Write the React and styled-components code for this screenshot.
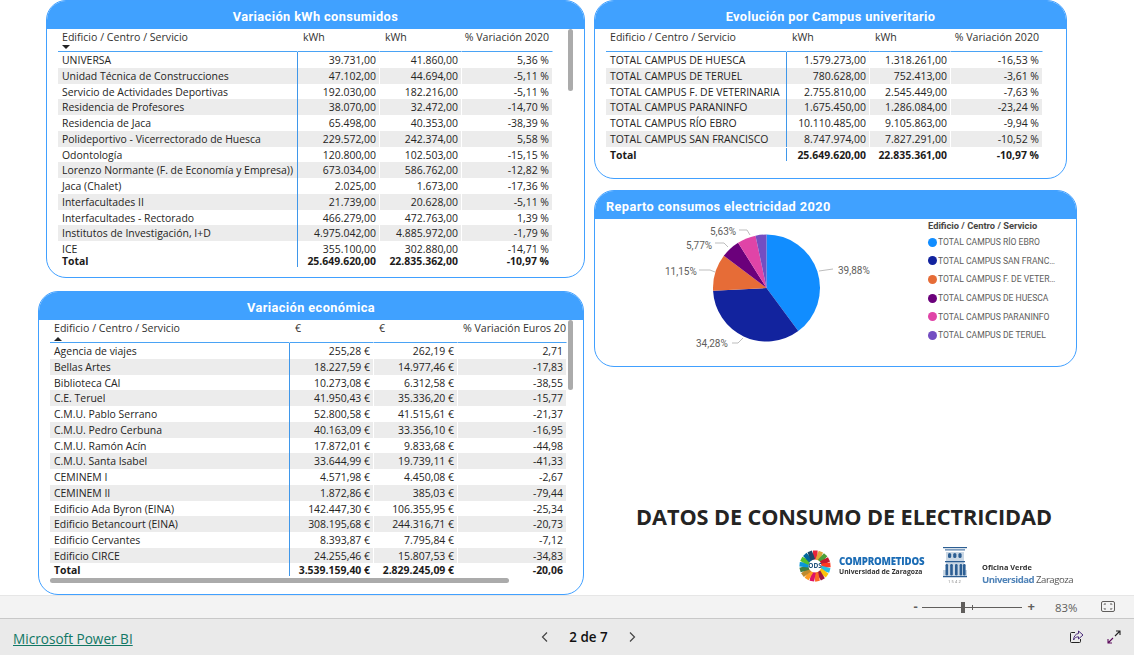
import React from 'react';
import styled, { createGlobalStyle } from 'styled-components';

const Global = createGlobalStyle`
  html, body { margin: 0; padding: 0; background: #fff; }
  body { font-family: "Open Sans", "Noto Sans", sans-serif; color: #252423; overflow: hidden; }
  * { box-sizing: border-box; }
`;

const Page = styled.div`
  width: 1134px; height: 655px; display: flex; flex-direction: column; overflow: hidden;
`;
const Canvas = styled.main`
  height: 595px; display: flex; flex: none;
`;
const LeftColumn = styled.div`
  width: 594px; padding-left: 38px; display: flex; flex-direction: column; gap: 13px;
`;
const RightColumn = styled.div`
  flex: 1; display: flex; flex-direction: column; gap: 11px;
`;
const Card = styled.section`
  position: relative; flex: none;
  width: ${p => p.$w}px; height: ${p => p.$h}px; margin-left: ${p => p.$ml || 0}px;
  border: 1px solid #41a0ff; border-radius: 20px; overflow: hidden; background: #fff;
`;
const CardTitle = styled.h2`
  margin: 0; height: ${p => p.$h || 28}px; background: #40a1ff; color: #fff;
  font: 700 12.8px/${p => p.$h || 28}px Roboto, sans-serif; letter-spacing: .38px;
  text-align: ${p => p.$left ? 'left' : 'center'}; padding: ${p => p.$left ? '0 0 0 11px' : '0'};
  padding-top: 3px; line-height: ${p => (p.$h || 28) - 3}px;
`;
const TableWrap = styled.div`
  margin-left: ${p => p.$ml}px; width: ${p => p.$w}px; overflow: hidden;
  font-size: 10.45px; line-height: 14px;
`;
const Row = styled.div`
  display: grid; grid-template-columns: ${p => p.$cols}; height: 15.75px;
  background: ${p => p.$alt ? '#ececec' : '#fff'};
  align-items: stretch;
`;
const HeadRow = styled(Row)`
  height: ${p => p.$h}px; background: #fff; position: relative; color: #33322f;
`;
const TotalRow = styled(Row)`
  height: 13px; font-weight: 700; color: #1c1b1a; line-height: 12px;
`;
const Rows = styled.div`
  height: ${p => p.$h}px; overflow: hidden;
`;
const NameCell = styled.div`
  padding: 1px 0 0 4px; border-right: 1px solid #3f97ea; white-space: nowrap; overflow: hidden;
`;
const NumCell = styled.div`
  padding: 1px 3px 0 0; text-align: right; white-space: nowrap; border-right: 1px solid #fff; overflow: hidden;
`;
const HeadCell = styled.div`
  padding: 1px 0 0 ${p => p.$right ? 0 : 5}px; padding-right: ${p => p.$right ? 3 : 0}px;
  text-align: ${p => p.$right ? 'right' : 'left'}; white-space: nowrap; overflow: hidden;
  border-bottom: 1.5px solid #4aa3f5; border-right: 1px solid #fff;
  font-size: 10.6px;
  &:first-child { padding-left: 4px; }
`;
const SortMark = styled.span`
  position: absolute; left: 4px; top: ${p => p.$up ? 17 : 16}px; width: 0; height: 0;
  border-left: 4px solid transparent; border-right: 4px solid transparent;
  ${p => p.$up ? 'border-bottom: 4px solid #222;' : 'border-top: 4px solid #222;'}
`;
const VScroll = styled.span`
  position: absolute; left: ${p => p.$x}px; top: ${p => p.$y}px; width: 5px; height: ${p => p.$h}px;
  background: #ababab; border-radius: 3px;
`;
const HScroll = styled.span`
  position: absolute; left: 11px; top: 286px; width: 459px; height: 5px; background: #ababab; border-radius: 3px;
`;
const PieBody = styled.div`
  display: flex; height: 146px;
`;
const PieSvg = styled.svg`
  width: 300px; height: 146px; margin-left: 25px; flex: none;
`;
const Legend = styled.div`
  margin-left: 8px; width: 130px; padding-top: 1px; font-family: Roboto, sans-serif; color: #605e5c;
`;
const LegendTitle = styled.div`
  font-size: 9.3px; font-weight: 700; line-height: 12px; color: #484644; margin-bottom: 1px; white-space: nowrap;
`;
const LegendItem = styled.div`
  display: flex; align-items: center; height: 18.6px; font-size: 8.6px; white-space: nowrap;
`;
const Dot = styled.span`
  width: 9px; height: 9px; border-radius: 50%; flex: none; margin-right: 1px; background: ${p => p.$c};
`;
const LegendText = styled.span`
  width: 119px; overflow: hidden; text-overflow: ellipsis;
`;
const Brand = styled.div`
  display: flex; flex-direction: column; margin-top: 125px; width: 483px;
`;
const BigTitle = styled.h1`
  margin: 0; font: 700 21.7px/28px "Open Sans", sans-serif; color: #252423; text-align: center;
  white-space: nowrap; letter-spacing: -.1px; width: 458px; margin-left: 21px;
`;
const Logos = styled.div`
  display: flex; align-items: flex-start; margin-top: 18px; margin-left: 205px; filter: blur(.3px);
`;
const LogoWord = styled.div`
  margin: 7px 0 0 8px; width: 91px; white-space: nowrap;
`;
const Compro = styled.div`
  font: 800 9.7px/11px "Open Sans", sans-serif; color: #1b6cb5; letter-spacing: -.2px;
`;
const UniLine = styled.div`
  font: 700 6.8px/9px "Open Sans", sans-serif; color: #333;
`;
const Verde = styled.div`
  margin: 13px 0 0 14px; white-space: nowrap;
`;
const VerdeTop = styled.div`
  font: 700 7.4px/10px "Open Sans", sans-serif; color: #333;
`;
const VerdeBottom = styled.div`
  font: 400 9.6px/15px "Open Sans", sans-serif; color: #555; letter-spacing: -.5px;
  b { color: #4f83b8; font-weight: 700; }
`;
const StatusBar = styled.div`
  height: 24px; flex: none; background: #f3f3f3; border-top: 1px solid #e6e6e6; border-bottom: 1px solid #c8c8c8;
  display: flex; align-items: center; justify-content: flex-end; color: #605e5c;
`;
const ZoomBtn = styled.span`
  font: 700 13px/14px "Open Sans", sans-serif; color: #605e5c; margin-top: -2px;
`;
const Slider = styled.div`
  position: relative; width: 100px; height: 1px; background: #605e5c; margin: 0 6px 0 4px;
`;
const Thumb = styled.span`
  position: absolute; left: 39px; top: -5px; width: 4px; height: 11px; background: #605e5c;
`;
const Tick = styled.span`
  position: absolute; left: 50px; top: -2px; width: 1px; height: 5px; background: #605e5c;
`;
const ZoomValue = styled.span`
  font-size: 11.4px; margin-left: 20px; width: 23px; color: #605e5c;
`;
const FitIcon = styled.svg`
  width: 16px; height: 12px; margin: 0 18px 0 22px;
`;
const Footer = styled.footer`
  flex: 1; background: #eaeaea; display: grid; grid-template-columns: 1fr auto 1fr; align-items: center; padding: 0 12px 0 13px;
`;
const PowerBi = styled.a`
  font-size: 13.6px; color: #117865; text-decoration: underline; justify-self: start; margin-top: 3px;
`;
const Pager = styled.div`
  display: flex; align-items: center; gap: 19px; margin-left: 42px;
`;
const PagerText = styled.span`
  font-size: 13.4px; font-weight: 600; color: #111; width: 41px; white-space: nowrap; text-align: center;
`;
const Actions = styled.div`
  display: flex; justify-content: flex-end; align-items: center; gap: 23px; padding-right: 1px;
`;

const universities = [
  ['UNIVERSA','39.731,00','41.860,00','5,36 %'],
  ['Unidad Técnica de Construcciones','47.102,00','44.694,00','-5,11 %'],
  ['Servicio de Actividades Deportivas','192.030,00','182.216,00','-5,11 %'],
  ['Residencia de Profesores','38.070,00','32.472,00','-14,70 %'],
  ['Residencia de Jaca','65.498,00','40.353,00','-38,39 %'],
  ['Polideportivo - Vicerrectorado de Huesca','229.572,00','242.374,00','5,58 %'],
  ['Odontología','120.800,00','102.503,00','-15,15 %'],
  ['Lorenzo Normante (F. de Economía y Empresa))','673.034,00','586.762,00','-12,82 %'],
  ['Jaca (Chalet)','2.025,00','1.673,00','-17,36 %'],
  ['Interfacultades II','21.739,00','20.628,00','-5,11 %'],
  ['Interfacultades - Rectorado','466.279,00','472.763,00','1,39 %'],
  ['Institutos de Investigación, I+D','4.975.042,00','4.885.972,00','-1,79 %'],
  ['ICE','355.100,00','302.880,00','-14,71 %'],
];
const campus = [
  ['TOTAL CAMPUS DE HUESCA','1.579.273,00','1.318.261,00','-16,53 %'],
  ['TOTAL CAMPUS DE TERUEL','780.628,00','752.413,00','-3,61 %'],
  ['TOTAL CAMPUS F. DE VETERINARIA','2.755.810,00','2.545.449,00','-7,63 %'],
  ['TOTAL CAMPUS PARANINFO','1.675.450,00','1.286.084,00','-23,24 %'],
  ['TOTAL CAMPUS RÍO EBRO','10.110.485,00','9.105.863,00','-9,94 %'],
  ['TOTAL CAMPUS SAN FRANCISCO','8.747.974,00','7.827.291,00','-10,52 %'],
];
const euros = [
  ['Agencia de viajes','255,28 €','262,19 €','2,71'],
  ['Bellas Artes','18.227,59 €','14.977,46 €','-17,83'],
  ['Biblioteca CAI','10.273,08 €','6.312,58 €','-38,55'],
  ['C.E. Teruel','41.950,43 €','35.336,20 €','-15,77'],
  ['C.M.U. Pablo Serrano','52.800,58 €','41.515,61 €','-21,37'],
  ['C.M.U. Pedro Cerbuna','40.163,09 €','33.356,10 €','-16,95'],
  ['C.M.U. Ramón Acín','17.872,01 €','9.833,68 €','-44,98'],
  ['C.M.U. Santa Isabel','33.644,99 €','19.739,11 €','-41,33'],
  ['CEMINEM I','4.571,98 €','4.450,08 €','-2,67'],
  ['CEMINEM II','1.872,86 €','385,03 €','-79,44'],
  ['Edificio Ada Byron (EINA)','142.447,30 €','106.355,95 €','-25,34'],
  ['Edificio Betancourt (EINA)','308.195,68 €','244.316,71 €','-20,73'],
  ['Edificio Cervantes','8.393,87 €','7.795,84 €','-7,12'],
  ['Edificio CIRCE','24.255,46 €','15.807,53 €','-34,83'],
];

function DataTable({ cols, ml, w, head, headH, rows, rowsH, total, sort, rightLast = true }) {
  return (
    <TableWrap $ml={ml} $w={w}>
      <HeadRow $cols={cols} $h={headH}>
        {head.map((h, i) => (
          <HeadCell key={i} $right={rightLast && i === 3}>{h}</HeadCell>
        ))}
        {sort && <SortMark $up={sort === 'up'} />}
      </HeadRow>
      <Rows $h={rowsH}>
        {rows.map((r, i) => (
          <Row key={r[0]} $cols={cols} $alt={i % 2 === 1}>
            <NameCell>{r[0]}</NameCell>
            <NumCell>{r[1]}</NumCell>
            <NumCell>{r[2]}</NumCell>
            <NumCell>{r[3]}</NumCell>
          </Row>
        ))}
      </Rows>
      <TotalRow $cols={cols}>
        <NameCell>{total[0]}</NameCell>
        <NumCell>{total[1]}</NumCell>
        <NumCell>{total[2]}</NumCell>
        <NumCell>{total[3]}</NumCell>
      </TotalRow>
    </TableWrap>
  );
}

const slices = [
  [39.88, '#118DFF'], [34.28, '#12239E'], [11.15, '#E66C37'],
  [5.77, '#6B007B'], [5.63, '#E044A7'], [3.29, '#744EC2'],
];
const CX = 146.5, CY = 69, R = 53.5;
function piePaths() {
  let a = 0;
  return slices.map(([v, c]) => {
    const a0 = a; a += (v / 100) * Math.PI * 2;
    const p = t => `${(CX + R * Math.sin(t)).toFixed(2)} ${(CY - R * Math.cos(t)).toFixed(2)}`;
    return <path key={c} d={`M${CX} ${CY}L${p(a0)}A${R} ${R} 0 ${a - a0 > Math.PI ? 1 : 0} 1 ${p(a)}Z`} fill={c} />;
  });
}
const pieLabels = [
  ['39,88%', 218, 55, 'M199 52L213 50'],
  ['34,28%', 76, 128, 'M112 124L118 124L123 119'],
  ['11,15%', 45, 56, 'M79 51L90 51L95 53'],
  ['5,77%', 66, 30, 'M95 24L104 24L108 28'],
  ['5,63%', 90, 16, 'M119 11L127 11L130 16'],
];
const legend = [
  ['TOTAL CAMPUS RÍO EBRO', '#118DFF'],
  ['TOTAL CAMPUS SAN FRANCISCO', '#12239E'],
  ['TOTAL CAMPUS F. DE VETERINARIA', '#E66C37'],
  ['TOTAL CAMPUS DE HUESCA', '#6B007B'],
  ['TOTAL CAMPUS PARANINFO', '#E044A7'],
  ['TOTAL CAMPUS DE TERUEL', '#744EC2'],
];

const sdg = ['#e5243b','#dda63a','#4c9f38','#c5192d','#ff3a21','#26bde2','#fcc30b','#a21942','#fd6925','#dd1367','#fd9d24','#bf8b2e','#3f7e44','#0a97d9','#56c02b','#00689d','#19486a'];

function OdsLogo() {
  return (
    <svg width="32" height="34" viewBox="0 0 32 34" style={{ flex: 'none' }}>
      {sdg.map((c, i) => (
        <rect key={c} x="14" y="1.5" width="4.6" height="9" fill={c} transform={`rotate(${(i * 360) / 17} 16 17)`} />
      ))}
      <text x="16" y="19.4" textAnchor="middle" fontSize="6.5" fontWeight="700" fill="#1d4f7a" fontFamily="Open Sans">ODS</text>
    </svg>
  );
}
function UniLogo() {
  return (
    <svg width="26" height="38" viewBox="0 0 26 38" style={{ flex: 'none', margin: '-3px 0 0 12px' }}>
      <g fill="#2c5e93">
        <rect x="1" y="1" width="24" height="1.2" />
        <rect x="3" y="3.4" width="20" height="1" />
        <path d="M4 6h18v9H4zM1 24h24v6H1zM4 15h18v9H4z" opacity=".25" />
        {[6, 11.2, 16.4].map(x => <rect key={x} x={x} y="7" width="3.2" height="5" rx="1.6" />)}
        <path d="M3 15h20v1.2H3zM1 30h24v1.2H1z" />
        {[3.5, 8.2, 13, 17.6, 21].map(x => <rect key={x} x={x} y="18" width="2.6" height="11.5" rx="1.2" />)}
      </g>
      <text x="13" y="37" textAnchor="middle" fontSize="4" letterSpacing="1.2" fill="#777" fontFamily="Open Sans">1542</text>
    </svg>
  );
}

export default function App() {
  return (
    <Page>
      <Global />
      <Canvas>
        <LeftColumn>
          <Card $w={539} $h={278} $ml={8}>
            <CardTitle>Variación kWh consumidos</CardTitle>
            <DataTable
              cols="240px 82px 82px 91px" ml={11} w={495} headH={23}
              head={['Edificio / Centro / Servicio', 'kWh', 'kWh', '% Variación 2020']}
              rows={universities} rowsH={202} sort="down"
              total={['Total', '25.649.620,00', '22.835.362,00', '-10,97 %']}
            />
            <VScroll $x={521} $y={28} $h={62} />
          </Card>
          <Card $w={546} $h={304}>
            <CardTitle>Variación económica</CardTitle>
            <DataTable
              cols="240px 84px 84px 109px" ml={11} w={517} headH={23} rightLast={false}
              head={['Edificio / Centro / Servicio', '€', '€', '% Variación Euros 2020']}
              rows={euros} rowsH={219.5} sort="up"
              total={['Total', '3.539.159,40 €', '2.829.245,09 €', '-20,06']}
            />
            <VScroll $x={529} $y={28} $h={70} />
            <HScroll />
          </Card>
        </LeftColumn>
        <RightColumn>
          <Card $w={473} $h={179}>
            <CardTitle>Evolución por Campus univeritario</CardTitle>
            <DataTable
              cols="181px 83px 81px 92px" ml={11} w={437} headH={23}
              head={['Edificio / Centro / Servicio', 'kWh', 'kWh', '% Variación 2020']}
              rows={campus} rowsH={96}
              total={['Total', '25.649.620,00', '22.835.361,00', '-10,97 %']}
            />
          </Card>
          <Card $w={483} $h={177}>
            <CardTitle $left>Reparto consumos electricidad 2020</CardTitle>
            <PieBody>
              <PieSvg viewBox="0 0 300 146">
                {piePaths()}
                {pieLabels.map(([t, x, y, d]) => (
                  <g key={t}>
                    <path d={d} fill="none" stroke="#bdbdbd" strokeWidth="1" />
                    <text x={x} y={y} fontSize="10" fill="#605e5c" fontFamily="Roboto">{t}</text>
                  </g>
                ))}
              </PieSvg>
              <Legend>
                <LegendTitle>Edificio / Centro / Servicio</LegendTitle>
                {legend.map(([t, c]) => (
                  <LegendItem key={t}><Dot $c={c} /><LegendText>{t}</LegendText></LegendItem>
                ))}
              </Legend>
            </PieBody>
          </Card>
          <Brand>
            <BigTitle>DATOS DE CONSUMO DE ELECTRICIDAD</BigTitle>
            <Logos>
              <OdsLogo />
              <LogoWord>
                <Compro>COMPROMETIDOS</Compro>
                <UniLine>Universidad de Zaragoza</UniLine>
              </LogoWord>
              <UniLogo />
              <Verde>
                <VerdeTop>Oficina Verde</VerdeTop>
                <VerdeBottom><b>Universidad</b> Zaragoza</VerdeBottom>
              </Verde>
            </Logos>
          </Brand>
        </RightColumn>
      </Canvas>
      <StatusBar>
        <ZoomBtn>-</ZoomBtn>
        <Slider><Thumb /><Tick /></Slider>
        <ZoomBtn>+</ZoomBtn>
        <ZoomValue>83%</ZoomValue>
        <FitIcon viewBox="0 0 16 12" fill="none" stroke="#605e5c">
          <rect x="1.5" y=".5" width="13" height="10" rx="1.5" />
          <path d="M4 3.5v-.5h2M12 3.5v-.5h-2M4 7.5v.5h2M12 7.5v.5h-2" />
        </FitIcon>
      </StatusBar>
      <Footer>
        <PowerBi href="#">Microsoft Power BI</PowerBi>
        <Pager>
          <svg width="8" height="12" viewBox="0 0 8 12" fill="none" stroke="#444" strokeWidth="1.2"><path d="M6 1.5L1.5 6 6 10.5" /></svg>
          <PagerText>2 de 7</PagerText>
          <svg width="8" height="12" viewBox="0 0 8 12" fill="none" stroke="#444" strokeWidth="1.2"><path d="M2 1.5L6.5 6 2 10.5" /></svg>
        </Pager>
        <Actions>
          <svg width="14" height="14" viewBox="0 0 14 14" fill="none" stroke="#222" strokeWidth="1">
            <path d="M5 2.5H1.5a1 1 0 0 0-1 1v8a1 1 0 0 0 1 1h8a1 1 0 0 0 1-1V9" />
            <path d="M8.5 1L13 5l-4.5 4V6.8C6 6.8 4.5 8 3.6 10c0-3.5 2-6.2 4.9-6.5z" stroke="#4a2b7a" />
          </svg>
          <svg width="14" height="14" viewBox="0 0 14 14" fill="none" strokeWidth="1.1">
            <path d="M13 1L8 6M9 1h4v4" stroke="#222" />
            <path d="M1 13l5-5M1 9v4h4" stroke="#5a0a5a" />
          </svg>
        </Actions>
      </Footer>
    </Page>
  );
}
